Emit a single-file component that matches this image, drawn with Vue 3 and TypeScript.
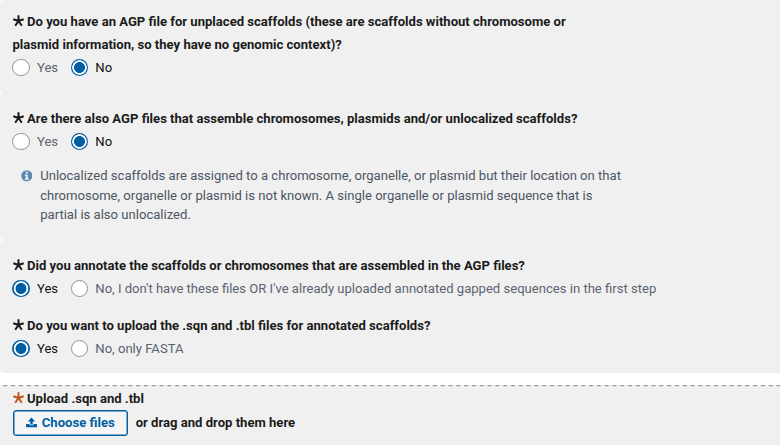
<script setup lang="ts">
import { ref } from 'vue'

interface Question {
  id: string
  lines: string[]
  options: string[]
  note?: string[]
}

const groups: Question[][] = [
  [
    {
      id: 'unplaced',
      lines: [
        'Do you have an AGP file for unplaced scaffolds (these are scaffolds without chromosome or',
        'plasmid information, so they have no genomic context)?',
      ],
      options: ['Yes', 'No'],
    },
  ],
  [
    {
      id: 'assembled',
      lines: ['Are there also AGP files that assemble chromosomes, plasmids and/or unlocalized scaffolds?'],
      options: ['Yes', 'No'],
      note: [
        'Unlocalized scaffolds are assigned to a chromosome, organelle, or plasmid but their location on that',
        'chromosome, organelle or plasmid is not known. A single organelle or plasmid sequence that is',
        'partial is also unlocalized.',
      ],
    },
  ],
  [
    {
      id: 'annotated',
      lines: ['Did you annotate the scaffolds or chromosomes that are assembled in the AGP files?'],
      options: ['Yes', "No, I don't have these files OR I've already uploaded annotated gapped sequences in the first step"],
    },
    {
      id: 'upload',
      lines: ['Do you want to upload the .sqn and .tbl files for annotated scaffolds?'],
      options: ['Yes', 'No, only FASTA'],
    },
  ],
]

const answers = ref<Record<string, number>>({ unplaced: 1, assembled: 1, annotated: 0, upload: 0 })
const star = 'M5.5 6V.3M5.5 6 .3 4.3M5.5 6l5.2-1.7M5.5 6l-3.3 4.8M5.5 6l3.3 4.8'
</script>

<template>
  <main class="form">
    <section v-for="(group, g) in groups" :key="g" class="panel" :class="'panel-' + (g + 1)">
      <div v-for="q in group" :key="q.id" class="question">
        <div class="title">
          <div v-for="(line, i) in q.lines" :key="i" class="title-line">
            <svg v-if="i === 0" class="star" viewBox="0 0 11 12"><path :d="star" /></svg>
            <span>{{ line }}</span>
          </div>
        </div>
        <div class="options">
          <label v-for="(option, i) in q.options" :key="i" class="option" :class="{ checked: answers[q.id] === i }">
            <input v-model="answers[q.id]" type="radio" :name="q.id" :value="i" />
            <span>{{ option }}</span>
          </label>
        </div>
        <div v-if="q.note" class="note">
          <svg class="info" viewBox="0 0 12 12">
            <circle cx="6" cy="6" r="5.8" />
            <path d="M4.9 1.8h2.2v1.9H4.9zM4 4.6h3.1v4h1v1.6H4V8.6h1V6.2H4z" />
          </svg>
          <div>
            <div v-for="line in q.note" :key="line">{{ line }}</div>
          </div>
        </div>
      </div>
    </section>

    <section class="dropzone">
      <svg class="edge" width="780" height="2" viewBox="0 0 780 2">
        <line x1="3.3" y1="0.6" x2="780" y2="0.6" />
      </svg>
      <div class="title-line upload-title">
        <svg class="star" viewBox="0 0 11 12"><path :d="star" /></svg>
        <span>Upload .sqn and .tbl</span>
      </div>
      <div class="upload-row">
        <button type="button" class="choose">
          <svg class="upload-icon" viewBox="0 0 12 11">
            <path d="M6 0 10 4.3H7.3V7.6H4.7V4.3H2zM.5 7.2h3.4v1.2h4.2V7.2h3.4q.5 0 .5.5v2.6q0 .5-.5.5H.5q-.5 0-.5-.5V7.7q0-.5.5-.5z" />
          </svg>
          <span>Choose files</span>
        </button>
        <span class="drag">or drag and drop them here</span>
      </div>
    </section>
  </main>
</template>

<style>
body {
  margin: 0;
  background: #fff;
  overflow: hidden;
}
</style>

<style scoped>
.form {
  width: 780px;
  height: 445px;
  overflow: hidden;
  display: flex;
  flex-direction: column;
  font-family: Roboto, "Liberation Sans", sans-serif;
  font-size: 13.08px;
  color: #1b1b1b;
  white-space: nowrap;
}
.panel {
  box-sizing: border-box;
  flex: none;
  background: #f0f0f0;
  border-radius: 4px 0 0 4px;
  padding-left: 12.5px;
}
.panel-1 {
  height: 93px;
  padding-top: 9.5px;
}
.panel-2 {
  height: 147px;
  padding-top: 13.5px;
}
.panel-3 {
  height: 133px;
  padding-top: 13.5px;
}
.question + .question {
  margin-top: 13.5px;
}
.title-line {
  display: flex;
  align-items: center;
  height: 23.5px;
  font-weight: 700;
}
.title-line + .title-line {
  height: 23px;
}
.star {
  width: 11px;
  height: 12px;
  margin-right: 3.5px;
  flex: none;
}
.star path {
  fill: none;
  stroke: #1b1b1b;
  stroke-width: 2;
}
.options {
  display: flex;
  height: 23px;
  align-items: center;
  gap: 12.4px;
  margin-left: -0.3px;
}
.option {
  display: flex;
  align-items: center;
  gap: 7.3px;
  color: #5c6370;
}
.option.checked {
  color: #111;
}
.option input {
  appearance: none;
  box-sizing: border-box;
  width: 17.5px;
  height: 17.5px;
  margin: 0;
  border: 1px solid #8d9299;
  border-radius: 50%;
  background: #fff;
}
.option.checked input {
  border: none;
  background: radial-gradient(circle closest-side, #005ea2 5.1px, #fff 5.8px, #fff 6.9px, #005ea2 7.6px);
}
.note {
  display: flex;
  margin-top: 13px;
  padding-left: 8px;
  line-height: 19.7px;
  color: #4b5563;
}
.info {
  width: 11.5px;
  height: 11.5px;
  margin: 4px 8px 0 0.2px;
}
.info circle {
  fill: #5b87b5;
}
.info path {
  fill: #f0f0f0;
}
.dropzone {
  flex: none;
  height: 60px;
  margin-top: 12px;
  background: #f0f0f0;
}
.edge {
  display: block;
}
.edge line {
  stroke: #999;
  stroke-width: 1.3;
  stroke-dasharray: 4 3.81;
}
.upload-title {
  height: 22.5px;
  padding-left: 12.5px;
}
.upload-title .star path {
  stroke: #c05620;
}
.upload-row {
  display: flex;
  align-items: center;
  padding-left: 12.5px;
  font-weight: 700;
}
.choose {
  box-sizing: border-box;
  display: flex;
  align-items: center;
  justify-content: center;
  width: 115.5px;
  height: 26px;
  padding: 0;
  border: 1px solid #005ea2;
  box-shadow: inset 0 0 0 0.5px #005ea2;
  border-radius: 3px;
  background: #f5f5f5;
  color: #005ea2;
  font: inherit;
}
.upload-icon {
  width: 11px;
  height: 11px;
  margin-right: 5px;
  fill: #005ea2;
}
.drag {
  margin-left: 7.7px;
}
</style>
